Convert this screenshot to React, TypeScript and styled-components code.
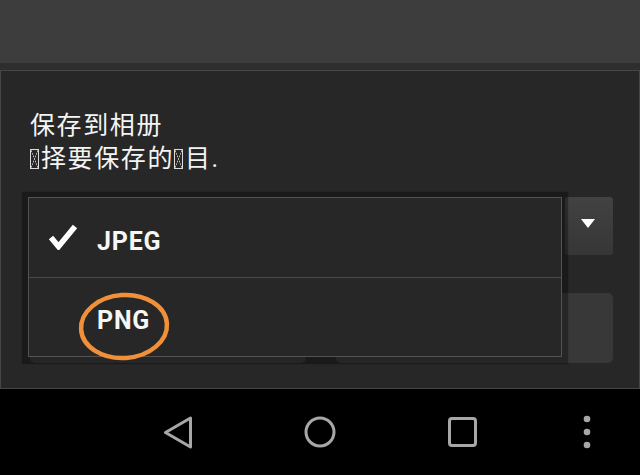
import React from 'react';
import styled, { createGlobalStyle } from 'styled-components';

const GlobalStyle = createGlobalStyle`
  html, body {
    margin: 0;
    padding: 0;
    background: #000;
  }
  body {
    font-family: Roboto, "Noto Sans CJK SC", "Noto Sans", sans-serif;
  }
`;

const Screen = styled.div`
  width: 640px;
  height: 475px;
  display: flex;
  flex-direction: column;
  overflow: hidden;
`;

const ActionBar = styled.div`
  height: 63px;
  background: #3d3d3d;
  flex-shrink: 0;
`;

const BarShadow = styled.div`
  height: 7px;
  background: #2e2e2e;
  flex-shrink: 0;
`;

const Panel = styled.div`
  flex: 1;
  background: #272727;
  border: 1px solid #464646;
  padding: 38px 26px 0 29px;
  display: flex;
  flex-direction: column;
`;

const Message = styled.div`
  color: #f4f4f4;
  font-size: 25px;
  line-height: 33px;
  letter-spacing: 1.6px;
`;

const Tofu = styled.span`
  display: inline-block;
  width: 7px;
  height: 18px;
  margin: 0 2px 0 0;
  vertical-align: -2px;
  border: 1px solid #dcdcdc;
  background:
    linear-gradient(to top right, transparent 46%, #cfcfcf 50%, transparent 54%),
    linear-gradient(to bottom right, transparent 46%, #cfcfcf 50%, transparent 54%);
`;

const Form = styled.div`
  position: relative;
  margin-top: 22px;
`;

const SpinnerRow = styled.div`
  height: 58px;
  display: flex;
  justify-content: flex-end;
`;

const SpinnerArrow = styled.div`
  width: 48px;
  height: 58px;
  border-radius: 3px;
  background: linear-gradient(#424242, #363636);
  display: flex;
  justify-content: center;
  padding: 22px 3px 0 0;
  box-sizing: border-box;

  &::after {
    content: '';
    width: 0;
    height: 0;
    border-left: 7px solid transparent;
    border-right: 7px solid transparent;
    border-top: 9px solid #fff;
  }
`;

const ButtonRow = styled.div`
  margin-top: 38px;
  display: grid;
  grid-template-columns: 276px 1fr;
  gap: 30px;
  height: 70px;
`;

const FlatButton = styled.div`
  background: #383838;
  border-radius: 5px;
`;

const Popup = styled.div`
  position: absolute;
  left: -2px;
  top: 0;
  width: 532px;
  background: #272727;
  border: 1px solid #535353;
  box-shadow: 0 1px 1px 6px rgba(0, 0, 0, 0.32);
`;

const Option = styled.div<{ divided?: boolean }>`
  position: relative;
  height: 79px;
  display: flex;
  align-items: center;
  padding: 7px 0 0 19px;
  box-sizing: border-box;
  border-top: ${(p) => (p.divided ? '1px solid #4a4a4a' : 'none')};
`;

const CheckSlot = styled.div`
  width: 49px;
  height: 26px;
  margin-top: -8px;
  display: flex;
  align-items: center;
`;

const OptionLabel = styled.span`
  color: #f6f6f6;
  font-family: Roboto, "Liberation Sans", sans-serif;
  font-weight: 700;
  font-size: 25px;
  letter-spacing: 0.8px;
`;

const Annotation = styled.svg`
  position: absolute;
  left: 50px;
  top: 15px;
  overflow: visible;
`;

const NavBar = styled.div`
  height: 86px;
  background: #000;
  flex-shrink: 0;
  display: flex;
  align-items: center;
  padding-left: 107px;
`;

const NavButton = styled.div<{ w?: number }>`
  width: ${(p) => p.w ?? 142}px;
  display: flex;
  justify-content: center;
  align-items: center;
`;

const MenuButton = styled(NavButton)`
  margin-left: auto;
`;

const navGray = '#a7a7a7';

function Check() {
  return (
    <svg width="30" height="26" viewBox="0 0 30 26">
      <path d="M3 13.5 L10.5 22.5 L27 2.5" fill="none" stroke="#fff" strokeWidth="5.6" strokeLinecap="butt" strokeLinejoin="miter" />
    </svg>
  );
}

export default function App() {
  return (
    <>
      <GlobalStyle />
      <Screen>
        <ActionBar />
        <BarShadow />
        <Panel>
          <Message>
            保存到相册
            <br />
            <Tofu />择要保存的<Tofu />目.
          </Message>
          <Form>
            <SpinnerRow>
              <SpinnerArrow />
            </SpinnerRow>
            <ButtonRow>
              <FlatButton />
              <FlatButton />
            </ButtonRow>
            <Popup>
              <Option>
                <CheckSlot>
                  <Check />
                </CheckSlot>
                <OptionLabel>JPEG</OptionLabel>
              </Option>
              <Option divided>
                <CheckSlot />
                <OptionLabel>PNG</OptionLabel>
                <Annotation width="90" height="67" viewBox="0 0 90 67">
                  <ellipse cx="45" cy="33.5" rx="43" ry="31.5" fill="none" stroke="#f0903a" strokeWidth="4.5" transform="rotate(-4 45 33.5)" />
                </Annotation>
              </Option>
            </Popup>
          </Form>
        </Panel>
        <NavBar>
          <NavButton>
            <svg width="30" height="33" viewBox="0 0 30 33">
              <path d="M27.5 2 L27.5 31 L2.5 16.5 Z" fill="none" stroke={navGray} strokeWidth="3" strokeLinejoin="round" />
            </svg>
          </NavButton>
          <NavButton>
            <svg width="32" height="32" viewBox="0 0 32 32">
              <circle cx="16" cy="16" r="14" fill="none" stroke={navGray} strokeWidth="3" />
            </svg>
          </NavButton>
          <NavButton>
            <svg width="29" height="30" viewBox="0 0 29 30">
              <rect x="1.5" y="1.5" width="26" height="27" rx="2.5" fill="none" stroke={navGray} strokeWidth="3" />
            </svg>
          </NavButton>
          <MenuButton w={106}>
            <svg width="8" height="34" viewBox="0 0 8 34">
              <circle cx="4" cy="4" r="3.3" fill={navGray} />
              <circle cx="4" cy="17" r="3.3" fill={navGray} />
              <circle cx="4" cy="30" r="3.3" fill={navGray} />
            </svg>
          </MenuButton>
        </NavBar>
      </Screen>
    </>
  );
}
